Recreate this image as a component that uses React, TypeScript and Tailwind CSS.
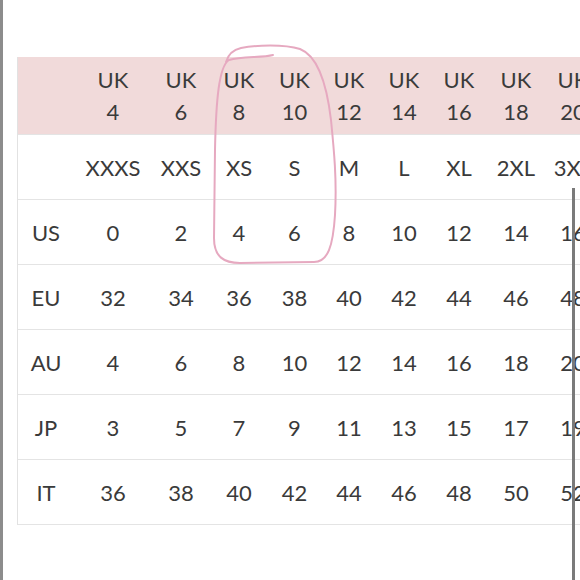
const sizes = [
  { uk: "4", letter: "XXXS" },
  { uk: "6", letter: "XXS" },
  { uk: "8", letter: "XS" },
  { uk: "10", letter: "S" },
  { uk: "12", letter: "M" },
  { uk: "14", letter: "L" },
  { uk: "16", letter: "XL" },
  { uk: "18", letter: "2XL" },
  { uk: "20", letter: "3XL" },
];

const rows: { label: string; values: string[] }[] = [
  { label: "US", values: ["0", "2", "4", "6", "8", "10", "12", "14", "16"] },
  { label: "EU", values: ["32", "34", "36", "38", "40", "42", "44", "46", "48"] },
  { label: "AU", values: ["4", "6", "8", "10", "12", "14", "16", "18", "20"] },
  { label: "JP", values: ["3", "5", "7", "9", "11", "13", "15", "17", "19"] },
  { label: "IT", values: ["36", "38", "40", "42", "44", "46", "48", "50", "52"] },
];

const cols = "grid grid-cols-[56px_78px_58px_58px_53px_56px_54px_56px_58px_56px] w-[583px]";

export default function App() {
  return (
    <div
      className="relative h-[580px] w-[580px] overflow-hidden border-l-[3px] border-[#8c8c8c] bg-white pl-[14px] pt-[57px] text-[22px] text-[#3a3a3a]"
      style={{ fontFamily: "Lato, 'Noto Sans', sans-serif" }}
    >
      <div className="border-l border-[#e2e2e2]">
        <div className={`${cols} h-[78px] items-center border-b border-[#e4e4e4] bg-[#f1dada]`}>
          <div />
          {sizes.map((s) => (
            <div key={s.uk} className="flex flex-col items-center leading-[32px]">
              <span>UK</span>
              <span>{s.uk}</span>
            </div>
          ))}
        </div>
        <div className={`${cols} h-[65px] items-center border-b border-[#e4e4e4]`}>
          <div />
          {sizes.map((s) => (
            <div key={s.letter} className="text-center">{s.letter}</div>
          ))}
        </div>
        {rows.map((r) => (
          <div key={r.label} className={`${cols} h-[65px] items-center border-b border-[#e4e4e4]`}>
            <div className="text-center">{r.label}</div>
            {r.values.map((v, i) => (
              <div key={i} className="text-center">{v}</div>
            ))}
          </div>
        ))}
      </div>

      {/* scrollbar */}
      <div className="absolute left-[569px] top-[188px] h-[400px] w-[3px] bg-[#7a7a7a]" />

      {/* hand-drawn circle */}
      <svg className="pointer-events-none absolute left-[-3px] top-0" width="580" height="580">
        <path
          d="M273 55 C262 58 242 56 229 60 C219 66 216 100 215 150 L214 238 C214 257 224 263 240 263 L314 262 C328 262 333 246 335 215 C337 180 334 150 331 120 C327 86 318 56 300 49 C284 44 256 45 241 48 C232 50 228 55 226 62"
          fill="none"
          stroke="#e6a9c0"
          strokeWidth="2"
          strokeLinecap="round"
        />
      </svg>
    </div>
  );
}
